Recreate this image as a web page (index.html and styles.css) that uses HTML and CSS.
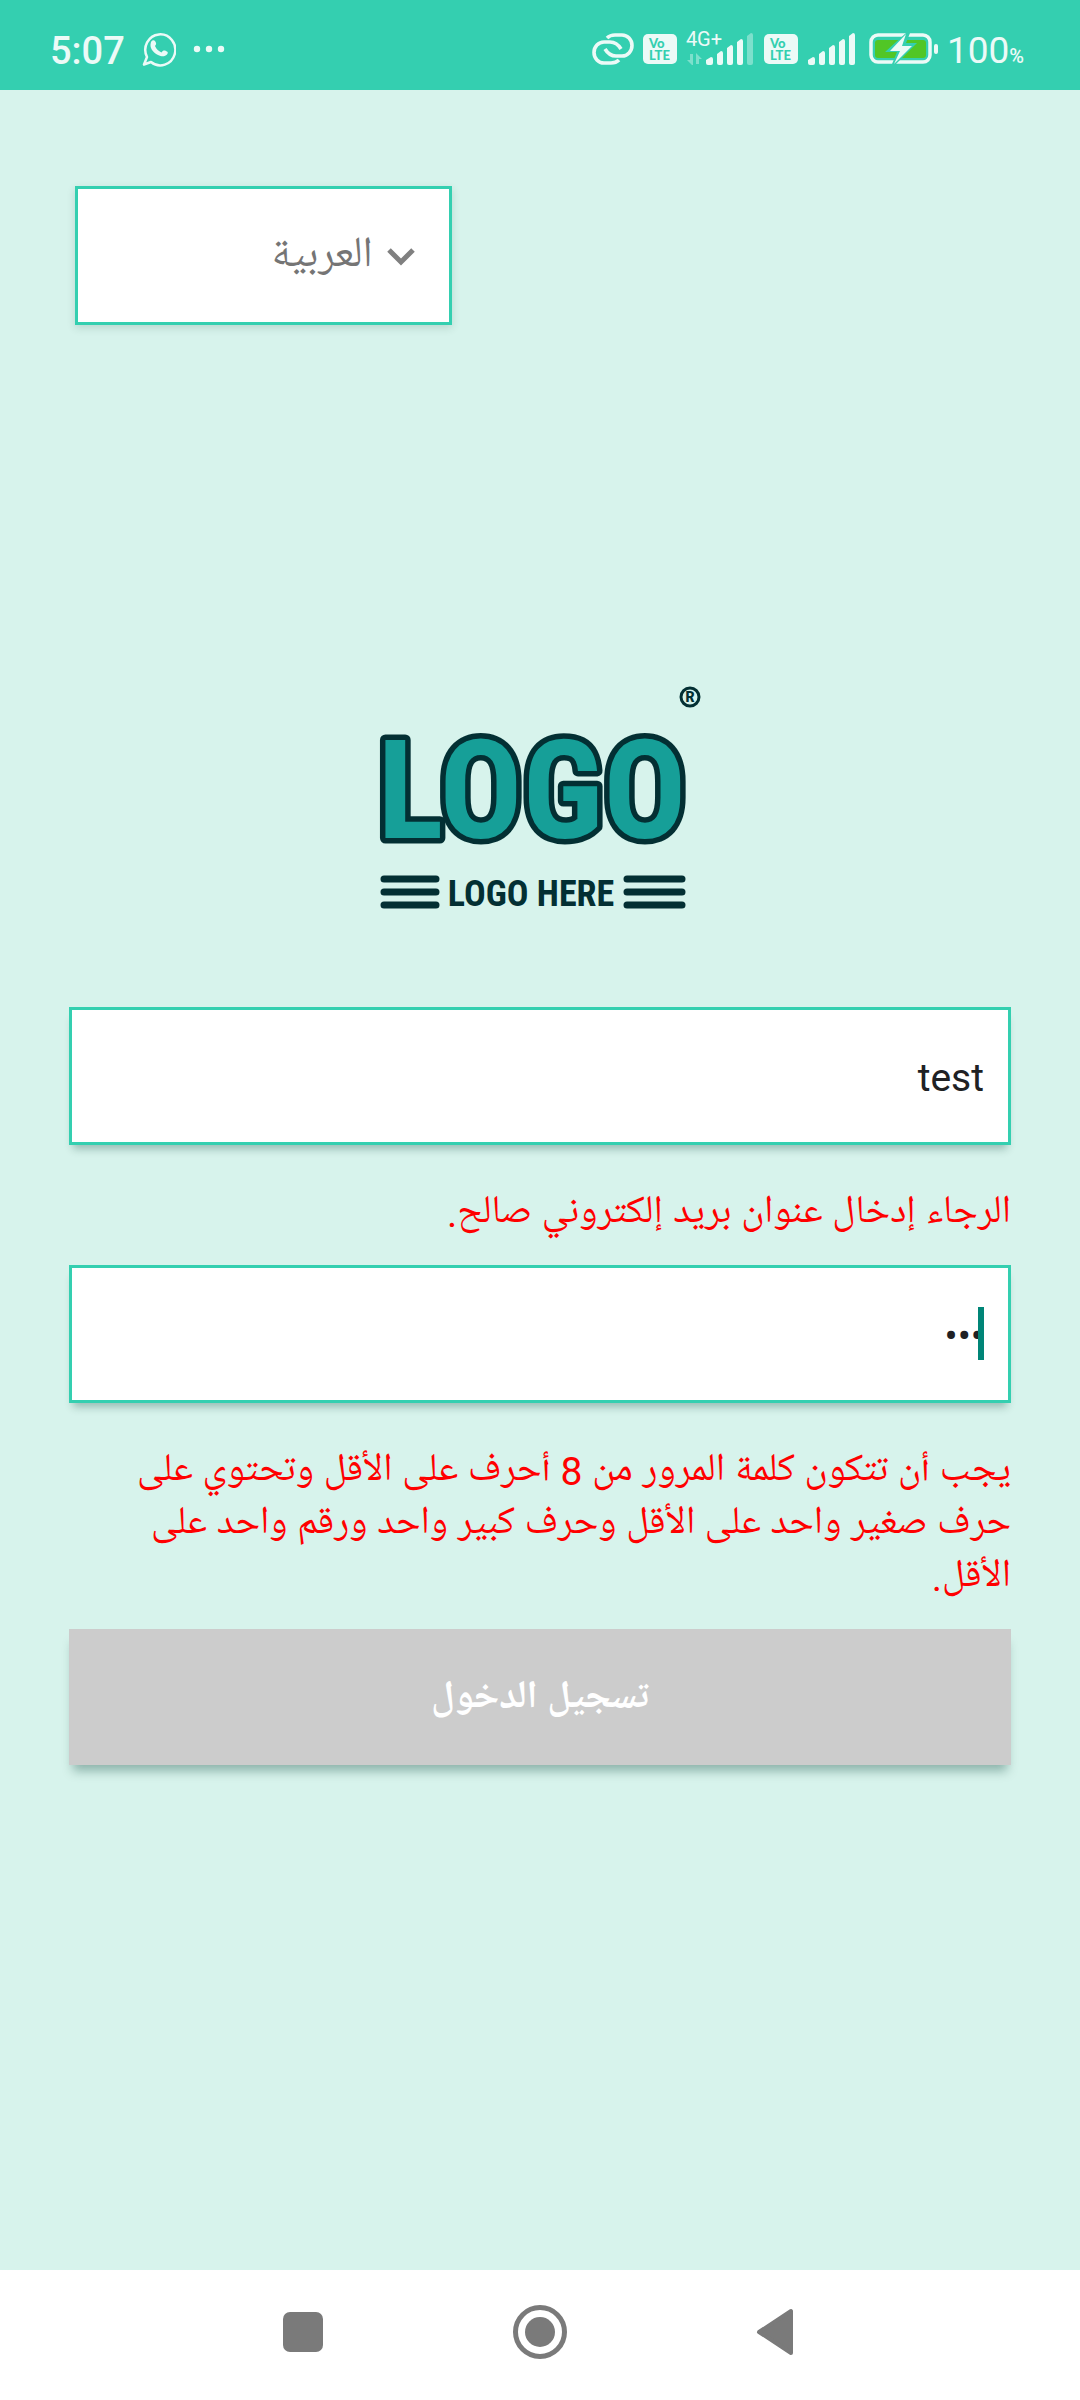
FILE: index.html
```html
<!DOCTYPE html>
<html lang="ar" dir="rtl">
<head>
<meta charset="utf-8">
<meta name="viewport" content="width=device-width, initial-scale=1">
<title>تسجيل الدخول</title>
<link rel="stylesheet" href="styles.css">
</head>
<body class="screen">
<header class="status" dir="ltr">
  <div class="status-side">
    <span class="clock">5:07</span>
    <svg class="chat" width="34" height="36" viewBox="0 0 34 36" fill="none" aria-hidden="true">
      <path d="M2 33.500 5 26A15 15.500 0 1 1 9 31Z" stroke="currentColor" stroke-width="2.500" stroke-linejoin="round"/>
      <path d="M9 11c1-2 3-2.500 4-1 1.500 2.500 1.500 3 0 5 1.500 3.500 3.500 5 6.500 6.500 1.500-2 2.500-2.500 4.500-1.500 2.500 1 2 2 1 3.500-2 2-5 2.500-9 .500C11 21.500 7 17 9 11Z" fill="currentColor"/>
    </svg>
    <svg width="32" height="8" viewBox="0 0 32 8" fill="currentColor" aria-hidden="true"><circle cx="4" cy="4" r="3.200"/><circle cx="16" cy="4" r="3.200"/><circle cx="28" cy="4" r="3.200"/></svg>
  </div>
  <div class="status-side status-icons">
    <svg width="42" height="32" viewBox="0 0 42 32" fill="none" stroke="currentColor" stroke-width="3.600" aria-hidden="true">
      <path d="M15 5C18 2 20 2 23 2h7a10 10.500 0 0 1 0 21h-6c-5 0-8-2-11-7"/>
      <path d="M27 27c-3 3-5 3-8 3h-7a10 10.500 0 0 1 0-21h6c5 0 8 2 11 7"/>
    </svg>
    <span class="volte"><span>Vo</span><span>LTE</span></span>
    <div class="mobile">
      <span class="network">4G+</span>
      <svg width="69" height="32" viewBox="0 0 69 32" fill="currentColor" aria-hidden="true">
        <path opacity=".4" d="M4 21h3v11H6l-5-5h3ZM10 31V20l6 6h-3v5Z"/>
        <path d="M20 27l5-3q2 0 2 2v4q0 2-2 2h-3q-2 0-2-2ZM31 21l4-3q2 0 2 2v10q0 2-2 2h-2q-2 0-2-2ZM41 15l4-3q2 0 2 2v16q0 2-2 2h-2q-2 0-2-2ZM51 9l4-3q2 0 2 2v22q0 2-2 2h-2q-2 0-2-2Z"/>
        <path opacity=".4" d="M61 3l4-3q2 0 2 2v28q0 2-2 2h-2q-2 0-2-2Z"/>
      </svg>
    </div>
    <span class="volte"><span>Vo</span><span>LTE</span></span>
    <svg width="49" height="32" viewBox="19 0 49 32" fill="currentColor" aria-hidden="true">
      <path d="M20 27l5-3q2 0 2 2v4q0 2-2 2h-3q-2 0-2-2ZM31 21l4-3q2 0 2 2v10q0 2-2 2h-2q-2 0-2-2ZM41 15l4-3q2 0 2 2v16q0 2-2 2h-2q-2 0-2-2ZM51 9l4-3q2 0 2 2v22q0 2-2 2h-2q-2 0-2-2ZM61 3l4-3q2 0 2 2v28q0 2-2 2h-2q-2 0-2-2Z"/>
    </svg>
    <svg class="battery" width="69" height="32" viewBox="0 0 69 32" aria-hidden="true">
      <rect x="2" y="2" width="59" height="27" rx="7" fill="none" stroke="currentColor" stroke-width="3.500"/>
      <rect x="6" y="7" width="51" height="18" rx="3" fill="#51c626"/>
      <path d="M37 0 16 19h12l-5 12h4L48 10H37l4-10Z" fill="#34cfb0"/>
      <path d="M37 1 21 18h10l-6 13L43 13H33Z" fill="currentColor"/>
      <rect x="65" y="11" width="4" height="10" rx="2" fill="currentColor"/>
    </svg>
    <span class="level">100<small>%</small></span>
  </div>
</header>

<main class="content">
  <div class="language">
    <select class="language-select" aria-label="اللغة"><option>العربية</option></select>
    <svg class="chevron" width="28" height="18" viewBox="0 0 28 18" fill="none" aria-hidden="true"><path d="m2 2 12 12L26 2" stroke="#808080" stroke-width="5"/></svg>
  </div>

  <svg class="logo" width="324" height="240" viewBox="0 -6 324 240" direction="ltr" role="img" aria-label="LOGO">
    <text class="logo-word" x="154" y="152" text-anchor="middle">LOGO</text>
    <circle cx="312" cy="11" r="9" fill="none" stroke="#032f33" stroke-width="3"/>
    <text class="logo-mark" x="312" y="16" text-anchor="middle">R</text>
    <path d="M6 193h52M6 206h52M6 219h52M249 193h55M249 206h55M249 219h55" stroke="#032f33" stroke-width="7" stroke-linecap="round"/>
    <text class="logo-sub" x="153" y="220" text-anchor="middle">LOGO HERE</text>
  </svg>

  <form class="login">
    <input class="field" type="text" value="test" aria-label="البريد الإلكتروني" aria-describedby="email-error">
    <p class="error" id="email-error">الرجاء إدخال عنوان بريد إلكتروني صالح.</p>
    <div class="password">
      <input class="field" type="password" value="abc" aria-label="كلمة المرور" aria-describedby="password-error">
      <span class="caret"></span>
    </div>
    <p class="error" id="password-error">يجب أن تتكون كلمة المرور من 8 أحرف على الأقل وتحتوي على حرف صغير واحد على الأقل وحرف كبير واحد ورقم واحد على الأقل.</p>
    <button class="submit" type="submit" disabled>تسجيل الدخول</button>
  </form>
</main>

<nav class="system-nav" dir="ltr">
  <button class="nav-button" aria-label="Recent apps"><svg width="56" height="56" viewBox="0 0 56 56"><rect x="8" y="8" width="40" height="40" rx="7" fill="#7a7a7a"/></svg></button>
  <button class="nav-button" aria-label="Home"><svg width="56" height="56" viewBox="0 0 56 56"><circle cx="28" cy="28" r="24.500" fill="none" stroke="#7a7a7a" stroke-width="5"/><circle cx="28" cy="28" r="15" fill="#7a7a7a"/></svg></button>
  <button class="nav-button" aria-label="Back"><svg width="56" height="56" viewBox="0 0 56 56"><path d="M10 28 42 7v42Z" fill="#7a7a7a" stroke="#7a7a7a" stroke-width="4" stroke-linejoin="round"/></svg></button>
</nav>
</body>
</html>
```

FILE: styles.css
```css
* { box-sizing: border-box; }

.screen {
  margin: 0;
  min-height: 100vh;
  display: flex;
  flex-direction: column;
  background: #d7f3ec;
  font-family: Roboto, "Noto Naskh Arabic UI", "Noto Naskh Arabic", "Noto Sans Arabic", "DejaVu Sans", sans-serif;
}

.status {
  height: 90px;
  padding: 8px 56px 0 50px;
  display: flex;
  align-items: center;
  justify-content: space-between;
  background: #34cfb0;
  color: #ecfaf7;
}
.status-side { display: flex; align-items: center; gap: 17px; }
.status-icons { gap: 9px; }
.clock, .level { padding-top: 4px; font-size: 38px; line-height: 44px; }
.clock { font-weight: 500; }
.level { font-size: 37px; }
.level small { font-size: 20px; font-weight: 500; line-height: 20px; }
.volte {
  width: 34px;
  height: 30px;
  padding: 3px 0;
  border-radius: 5px;
  display: flex;
  flex-direction: column;
  background: #ecfaf7;
  color: #34cfb0;
  font: 900 13px/12px Lato, sans-serif;
}
.volte span { padding-left: 6px; }
.mobile { position: relative; display: flex; }
.network { position: absolute; left: 0; top: -4px; font-size: 20px; line-height: 20px; }
.battery { margin-left: 4px; }

.content { flex: 1; padding: 96px 69px; }

.language { position: relative; width: 40%; margin: 0 auto 0 6px; }
.language-select {
  width: 100%;
  height: 139px;
  padding: 2px 76px 0 20px;
  appearance: none;
  border: 3px solid #34cfb0;
  border-radius: 0;
  background: #fff;
  box-shadow: 0 3px 8px rgba(0, 60, 50, .15);
  color: #757575;
  font: inherit;
  font-size: 43px;
}
.chevron { position: absolute; right: 37px; top: 62px; }

.logo { display: block; margin: 355px auto 87px; direction: ltr; overflow: visible; }
.logo-word {
  font: 700 138px "Roboto Condensed", "Liberation Sans Narrow", Roboto, sans-serif;
  fill: #169f98;
  stroke: #032f33;
  stroke-width: 11px;
  stroke-linejoin: round;
  paint-order: stroke;
}
.logo-mark { font: 900 14px Roboto, sans-serif; fill: #032f33; }
.logo-sub { font: 700 36px "Roboto Condensed", "Liberation Sans Narrow", Roboto, sans-serif; fill: #032f33; }

.login { display: flex; flex-direction: column; }
.field {
  display: block;
  width: 100%;
  height: 138px;
  padding: 4px 24px 0;
  border: 3px solid #34cfb0;
  border-radius: 0;
  background: #fff;
  box-shadow: 0 8px 8px -4px rgba(0, 60, 50, .3);
  color: #202124;
  font: inherit;
  font-size: 39px;
}
.password { position: relative; }
.caret { position: absolute; right: 27px; top: 42px; width: 6px; height: 53px; background: #008577; }
.error { margin: 43px 0 24px; color: #f00; font-size: 39px; line-height: 53px; }
.submit {
  height: 136px;
  border: 0;
  background: #ccc;
  box-shadow: 0 10px 10px -4px rgba(0, 60, 50, .35);
  color: #fff;
  font: inherit;
  font-size: 39px;
  font-weight: 700;
}

.system-nav { height: 130px; padding: 0 275px 6px; display: flex; align-items: center; justify-content: space-between; background: #fff; }
.nav-button { display: flex; padding: 0; border: 0; background: none; }
```
